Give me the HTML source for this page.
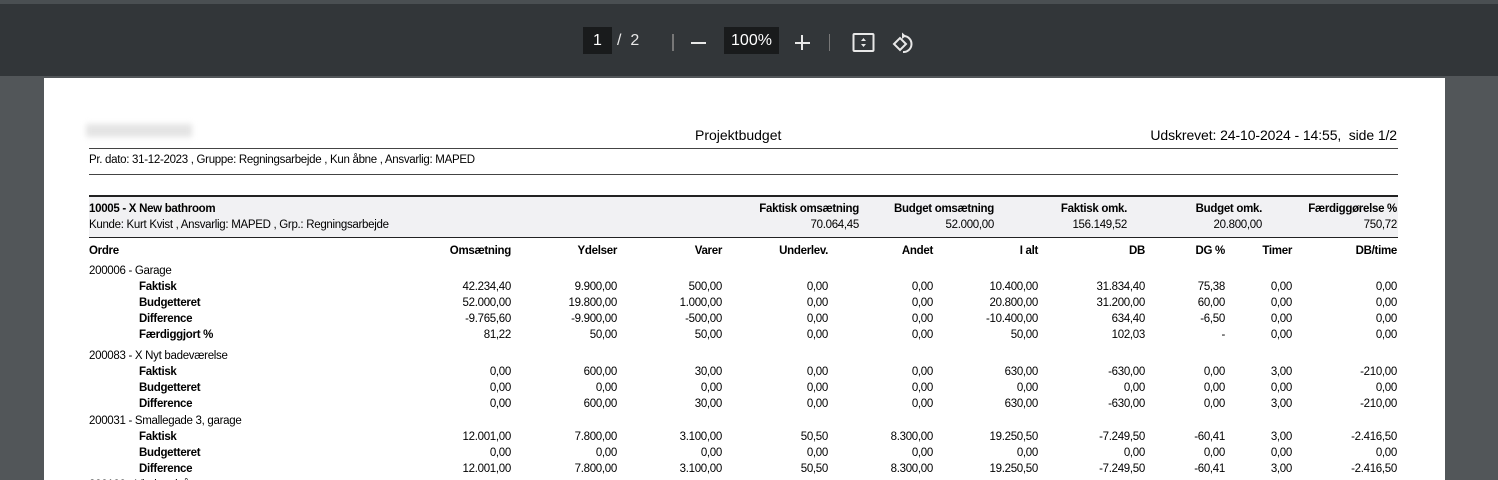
<!DOCTYPE html>
<html><head><meta charset="utf-8"><style>
*{margin:0;padding:0;box-sizing:border-box}
html,body{width:1498px;height:480px;overflow:hidden}
body{background:#525659;font-family:"Liberation Sans",Arial,sans-serif;position:relative;color:#000}
.tb{position:absolute;left:0;top:0;width:1498px;height:76px;background:#323639;border-top:4px solid #4a4f52}
.pg{position:absolute;left:44px;top:78px;width:1401px;height:420px;background:#fff}
.t{position:absolute;white-space:nowrap;font-size:11.5px;letter-spacing:-0.3px;line-height:13px}
.b{font-weight:bold}
.r{position:absolute;left:0;width:1498px;height:13px;font-size:11.5px;letter-spacing:-0.3px;line-height:13px}
.r span{position:absolute;white-space:nowrap}
.c1{right:987px}.c2{right:881px}.c3{right:776px}.c4{right:670px}.c5{right:565px}.c6{right:460px}.c7{right:353px}.c8{right:273px}.c9{right:206px}.c10{right:101px}
.l0{left:89px}.l1{left:139px;font-weight:bold}
.line{position:absolute;left:89px;width:1309px;background:#444}
</style></head><body>
<div class="tb">
 <div style="position:absolute;left:583px;top:23px;width:29px;height:27px;background:#191b1c;color:#fff;font-size:16px;text-align:center;line-height:27px">1</div>
 <div style="position:absolute;left:617px;top:23px;color:#e8e8e8;font-size:16px;line-height:27px">/&nbsp;&nbsp;2</div>
 <div style="position:absolute;left:672px;top:30px;width:2px;height:17px;background:#777"></div>
 <div style="position:absolute;left:691px;top:38px;width:15px;height:2px;background:#e8e8e8"></div>
 <div style="position:absolute;left:724px;top:23px;width:55px;height:27px;background:#191b1c;color:#fff;font-size:16px;text-align:center;line-height:27px">100%</div>
 <div style="position:absolute;left:795px;top:38px;width:15px;height:2px;background:#e8e8e8"></div>
 <div style="position:absolute;left:801px;top:31px;width:2px;height:15px;background:#e8e8e8"></div>
 <div style="position:absolute;left:829px;top:30px;width:1px;height:17px;background:#777"></div>
 <svg style="position:absolute;left:852px;top:28px" width="24" height="22" viewBox="0 0 24 22"><rect x="1.5" y="2" width="20" height="17" rx="1" fill="none" stroke="#e8e8e8" stroke-width="2"/><path d="M11.5 6l-2.5 3h5zM11.5 15l-2.5-3h5z" fill="#e8e8e8"/></svg>
 <svg style="position:absolute;left:892px;top:27px" width="26" height="26" viewBox="0 0 26 26"><path d="M2 13l6-6 6 6-6 6z" fill="none" stroke="#e8e8e8" stroke-width="2"/><path d="M12 5a8 8 0 1 1-1 16" fill="none" stroke="#e8e8e8" stroke-width="2"/><path d="M10 1.5l4 3.5-4 3z" fill="#e8e8e8"/></svg>
</div>
<div class="pg"></div>
<div style="position:absolute;left:86px;top:124px;width:106px;height:13px;background:#e4e4e4;filter:blur(3px)"></div>
<div class="t" style="left:695px;top:127px;font-size:14px;line-height:17px;letter-spacing:0">Projektbudget</div>
<div class="t" style="right:101px;top:127px;font-size:14px;line-height:17px;letter-spacing:-0.1px">Udskrevet: 24-10-2024 - 14:55,&nbsp; side 1/2</div>
<div class="line" style="top:148px;height:1px"></div>
<div class="t" style="left:89px;top:154px">Pr. dato: 31-12-2023 , Gruppe: Regningsarbejde , Kun åbne , Ansvarlig: MAPED</div>
<div class="line" style="top:174px;height:1px"></div>
<div style="position:absolute;left:89px;top:195px;width:1309px;height:43px;background:#f1f1f3;border-top:2px solid #222;border-bottom:1px solid #222"></div>
<div class="t b" style="left:89px;top:203px">10005 - X New bathroom</div>
<div class="t" style="left:89px;top:219px">Kunde: Kurt Kvist , Ansvarlig: MAPED , Grp.: Regningsarbejde</div>
<div class="r" style="top:203px;font-weight:bold"><span style="right:639px">Faktisk omsætning</span><span style="right:504px">Budget omsætning</span><span style="right:371px">Faktisk omk.</span><span style="right:236px">Budget omk.</span><span style="right:101px">Færdiggørelse %</span></div>
<div class="r" style="top:219px"><span style="right:639px">70.064,45</span><span style="right:504px">52.000,00</span><span style="right:371px">156.149,52</span><span style="right:236px">20.800,00</span><span style="right:101px">750,72</span></div>
<div class="r b" style="top:245px;font-weight:bold"><span class="l0">Ordre</span><span class="c1">Omsætning</span><span class="c2">Ydelser</span><span class="c3">Varer</span><span class="c4">Underlev.</span><span class="c5">Andet</span><span class="c6">I alt</span><span class="c7">DB</span><span class="c8">DG %</span><span class="c9">Timer</span><span class="c10">DB/time</span></div>
<div class="r" style="top:265px"><span class="l0">200006 - Garage</span></div>
<div class="r" style="top:281px"><span class="l1">Faktisk</span><span class="c1">42.234,40</span><span class="c2">9.900,00</span><span class="c3">500,00</span><span class="c4">0,00</span><span class="c5">0,00</span><span class="c6">10.400,00</span><span class="c7">31.834,40</span><span class="c8">75,38</span><span class="c9">0,00</span><span class="c10">0,00</span></div>
<div class="r" style="top:297px"><span class="l1">Budgetteret</span><span class="c1">52.000,00</span><span class="c2">19.800,00</span><span class="c3">1.000,00</span><span class="c4">0,00</span><span class="c5">0,00</span><span class="c6">20.800,00</span><span class="c7">31.200,00</span><span class="c8">60,00</span><span class="c9">0,00</span><span class="c10">0,00</span></div>
<div class="r" style="top:313px"><span class="l1">Difference</span><span class="c1">-9.765,60</span><span class="c2">-9.900,00</span><span class="c3">-500,00</span><span class="c4">0,00</span><span class="c5">0,00</span><span class="c6">-10.400,00</span><span class="c7">634,40</span><span class="c8">-6,50</span><span class="c9">0,00</span><span class="c10">0,00</span></div>
<div class="r" style="top:329px"><span class="l1">Færdiggjort %</span><span class="c1">81,22</span><span class="c2">50,00</span><span class="c3">50,00</span><span class="c4">0,00</span><span class="c5">0,00</span><span class="c6">50,00</span><span class="c7">102,03</span><span class="c8">-</span><span class="c9">0,00</span><span class="c10">0,00</span></div>
<div class="r" style="top:350px"><span class="l0">200083 - X Nyt badeværelse</span></div>
<div class="r" style="top:366px"><span class="l1">Faktisk</span><span class="c1">0,00</span><span class="c2">600,00</span><span class="c3">30,00</span><span class="c4">0,00</span><span class="c5">0,00</span><span class="c6">630,00</span><span class="c7">-630,00</span><span class="c8">0,00</span><span class="c9">3,00</span><span class="c10">-210,00</span></div>
<div class="r" style="top:382px"><span class="l1">Budgetteret</span><span class="c1">0,00</span><span class="c2">0,00</span><span class="c3">0,00</span><span class="c4">0,00</span><span class="c5">0,00</span><span class="c6">0,00</span><span class="c7">0,00</span><span class="c8">0,00</span><span class="c9">0,00</span><span class="c10">0,00</span></div>
<div class="r" style="top:398px"><span class="l1">Difference</span><span class="c1">0,00</span><span class="c2">600,00</span><span class="c3">30,00</span><span class="c4">0,00</span><span class="c5">0,00</span><span class="c6">630,00</span><span class="c7">-630,00</span><span class="c8">0,00</span><span class="c9">3,00</span><span class="c10">-210,00</span></div>
<div class="r" style="top:415px"><span class="l0">200031 - Smallegade 3, garage</span></div>
<div class="r" style="top:431px"><span class="l1">Faktisk</span><span class="c1">12.001,00</span><span class="c2">7.800,00</span><span class="c3">3.100,00</span><span class="c4">50,50</span><span class="c5">8.300,00</span><span class="c6">19.250,50</span><span class="c7">-7.249,50</span><span class="c8">-60,41</span><span class="c9">3,00</span><span class="c10">-2.416,50</span></div>
<div class="r" style="top:447px"><span class="l1">Budgetteret</span><span class="c1">0,00</span><span class="c2">0,00</span><span class="c3">0,00</span><span class="c4">0,00</span><span class="c5">0,00</span><span class="c6">0,00</span><span class="c7">0,00</span><span class="c8">0,00</span><span class="c9">0,00</span><span class="c10">0,00</span></div>
<div class="r" style="top:463px"><span class="l1">Difference</span><span class="c1">12.001,00</span><span class="c2">7.800,00</span><span class="c3">3.100,00</span><span class="c4">50,50</span><span class="c5">8.300,00</span><span class="c6">19.250,50</span><span class="c7">-7.249,50</span><span class="c8">-60,41</span><span class="c9">3,00</span><span class="c10">-2.416,50</span></div>
<div class="r" style="top:479px"><span class="l0">200100 - Vinduer i tårn</span></div>
</body></html>
